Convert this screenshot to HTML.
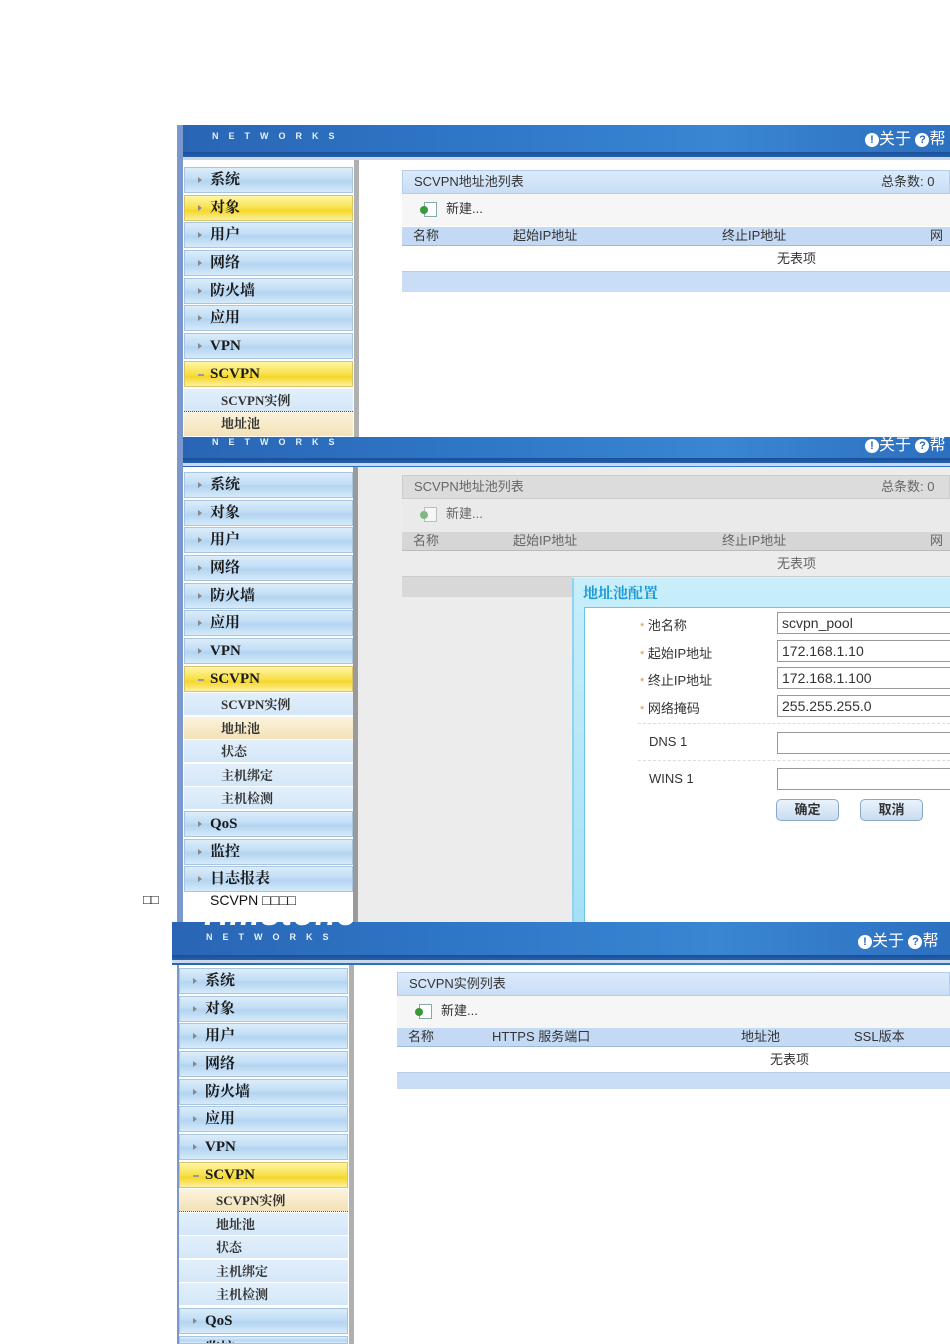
<!DOCTYPE html>
<html style="height:1344px;overflow:hidden"><head><meta charset="utf-8"><style>
*{margin:0;padding:0;box-sizing:border-box}
body{width:950px;height:1344px;background:#fff;position:relative;overflow:hidden;font-family:"Liberation Sans","Noto Sans CJK SC",sans-serif;font-size:13px;color:#222}
.a{position:absolute}
.hdr{position:absolute;background:linear-gradient(90deg,#2a65b5,#2f78c8 40%,#3a86d2 70%,#2c70c0);overflow:hidden}
.hdr .band{position:absolute;left:0;right:0;height:5px;background:linear-gradient(#1a4f99,#2760ab)}
.hdr .ln{position:absolute;left:0;right:0;height:3px;background:#c9d9ec}
.logo{position:absolute;color:#fff;font:italic bold 34px "Liberation Sans",sans-serif;letter-spacing:1px}
.nw{position:absolute;color:#e8f0fa;font:bold 9px "Liberation Sans",sans-serif;letter-spacing:10px}
.tr{position:absolute;color:#fff;font-size:16px;white-space:nowrap}
.tr b{display:inline-block;width:14px;height:14px;border-radius:50%;background:#fff;color:#2a66b8;font-size:11px;text-align:center;line-height:14px;vertical-align:1px}
.strip{position:absolute;background:#7b98cc}
.it{position:absolute;width:169px;height:26px;background:linear-gradient(#dcedfa,#c0ddf5 45%,#b3d4f1 55%,#d6eaf9);border:1px solid #a7c5e0;font-weight:bold;font-size:15px;line-height:24px;padding-left:25px;color:#1a1a1a;font-family:"Liberation Serif","Noto Serif CJK SC",serif}
.it:before{content:"";position:absolute;left:13px;top:9px;border-left:4px solid #888;border-top:3px solid transparent;border-bottom:3px solid transparent}
.y{background:linear-gradient(#fff6a6,#f8e04a 50%,#f5d628 60%,#fdf0a0);border-color:#d9c46a}
.y.dn:before{border:none;width:6px;height:2px;background:#999;top:12px}
.sub{position:absolute;width:169px;height:23px;background:linear-gradient(#e2effb,#d4e7f8);border-bottom:1px solid #fff;font-weight:bold;font-size:13px;line-height:23px;padding-left:37px;color:#333;font-family:"Liberation Serif","Noto Serif CJK SC",serif}
.hl{background:linear-gradient(#fbf3dc,#f3e2b8)}
.sb{position:absolute;width:5px;background:#9a9a9a}
.tt{position:absolute;background:linear-gradient(#dbeafb,#c9def6);border:1px solid #b6cde9;font-size:13px;line-height:22px;padding-left:11px;color:#333}
.tb{position:absolute;background:#f6f6f6;font-size:13px;line-height:30px;padding-left:44px;color:#333}
.ic{position:absolute;left:22px;top:8px;width:13px;height:15px;border:1px solid #8aa;background:#fff}
.ic:before{content:"";position:absolute;left:-5px;top:3px;width:8px;height:8px;background:#3a9a3a;border-radius:50%}
.th{position:absolute;background:#c4daf4;border-bottom:1px solid #9fb9d8;font-size:13px;line-height:18px;color:#333}
.th span,.rw span{position:absolute}
.rw{position:absolute;background:#fff;border-bottom:1px solid #b6cde9;font-size:13px;line-height:26px;color:#333}
.ft{position:absolute;background:#c9def6}
.lab{position:absolute;font-size:13px;color:#333}
.lab i{color:#c8a040;font-style:normal;font-size:11px}
.inp{position:absolute;height:22px;border:1px solid #999;border-right:none;background:#fff;font-size:14px;line-height:20px;padding-left:4px;color:#333}
.dash{position:absolute;height:0;border-top:1px dashed #ddd}
.btn{position:absolute;width:63px;height:22px;border:1px solid #88a8c8;border-radius:5px;background:linear-gradient(#eaf3fc,#c9dcef);font-weight:bold;font-size:13px;text-align:center;line-height:20px;color:#333}
</style></head><body>

<!-- PANEL 1 -->
<div class="strip" style="left:177px;top:125px;width:6px;height:312px"></div>
<div class="hdr" style="left:183px;top:125px;width:767px;height:35px">
  <div class="logo" style="left:28px;top:-33px">Hillstone</div>
  <div class="nw" style="left:29px;top:6px">NETWORKS</div>
  <div class="tr" style="left:682px;top:0px"><b>!</b>关于 <b>?</b>帮</div>
  <div class="band" style="top:27px"></div><div class="ln" style="top:32px"></div>
</div>
<div class="it" style="left:184px;top:167px">系统</div>
<div class="it y" style="left:184px;top:195px">对象</div>
<div class="it" style="left:184px;top:222px">用户</div>
<div class="it" style="left:184px;top:250px">网络</div>
<div class="it" style="left:184px;top:278px">防火墙</div>
<div class="it" style="left:184px;top:305px">应用</div>
<div class="it" style="left:184px;top:333px">VPN</div>
<div class="it y dn" style="left:184px;top:361px">SCVPN</div>
<div class="sub" style="left:184px;top:389px;border-bottom:1px dotted #555">SCVPN实例</div>
<div class="sub hl" style="left:184px;top:412px;height:25px">地址池</div>
<div class="sb" style="left:354px;top:160px;height:277px;background:#b0b0b0"></div>
<div class="tt" style="left:402px;top:170px;width:548px;height:24px">SCVPN地址池列表<span class="a" style="left:478px">总条数: 0 &nbsp;每</span></div>
<div class="tb" style="left:402px;top:194px;width:548px;height:32px"><div class="ic"></div>新建...</div>
<div class="th" style="left:402px;top:227px;width:548px;height:19px"><span style="left:11px">名称</span><span style="left:111px">起始IP地址</span><span style="left:320px">终止IP地址</span><span style="left:528px">网络</span></div>
<div class="rw" style="left:402px;top:246px;width:548px;height:26px"><span style="left:375px">无表项</span></div>
<div class="ft" style="left:402px;top:272px;width:548px;height:20px"></div>

<!-- PANEL 2 -->
<div class="strip" style="left:177px;top:437px;width:6px;height:485px"></div>
<div class="hdr" style="left:183px;top:437px;width:767px;height:30px">
  <div class="nw" style="left:29px;top:0px">NETWORKS</div>
  <div class="tr" style="left:682px;top:-6px"><b>!</b>关于 <b>?</b>帮</div>
  <div class="band" style="top:21px"></div><div class="ln" style="top:26px"></div>
</div>
<div class="a" style="left:357px;top:467px;width:593px;height:455px;background:#ececec"></div>
<div class="it" style="left:184px;top:472px">系统</div>
<div class="it" style="left:184px;top:500px">对象</div>
<div class="it" style="left:184px;top:527px">用户</div>
<div class="it" style="left:184px;top:555px">网络</div>
<div class="it" style="left:184px;top:583px">防火墙</div>
<div class="it" style="left:184px;top:610px">应用</div>
<div class="it" style="left:184px;top:638px">VPN</div>
<div class="it y dn" style="left:184px;top:666px">SCVPN</div>
<div class="sub" style="left:184px;top:693px">SCVPN实例</div>
<div class="sub hl" style="left:184px;top:717px">地址池</div>
<div class="sub" style="left:184px;top:740px">状态</div>
<div class="sub" style="left:184px;top:764px">主机绑定</div>
<div class="sub" style="left:184px;top:787px">主机检测</div>
<div class="it" style="left:184px;top:811px">QoS</div>
<div class="it" style="left:184px;top:839px">监控</div>
<div class="it" style="left:184px;top:866px">日志报表</div>
<div class="a" style="left:210px;top:892px;font-size:14px;color:#111">SCVPN □□□□</div>
<div class="a" style="left:143px;top:892px;font-size:13px;color:#111">□□</div>
<div class="sb" style="left:353px;top:467px;height:455px"></div>
<div class="tt" style="left:402px;top:475px;width:548px;height:24px;background:#dcdcdc;border-color:#ccc;color:#666">SCVPN地址池列表<span class="a" style="left:478px">总条数: 0 &nbsp;每</span></div>
<div class="tb" style="left:402px;top:499px;width:548px;height:32px;background:#eaeaea;color:#666"><div class="ic" style="opacity:.6"></div>新建...</div>
<div class="th" style="left:402px;top:532px;width:548px;height:19px;background:#d6d6d6;border-color:#bbb;color:#666"><span style="left:11px">名称</span><span style="left:111px">起始IP地址</span><span style="left:320px">终止IP地址</span><span style="left:528px">网络</span></div>
<div class="rw" style="left:402px;top:551px;width:548px;height:26px;background:#ececec;border-color:#ccc;color:#666"><span style="left:375px">无表项</span></div>
<div class="ft" style="left:402px;top:577px;width:170px;height:20px;background:#d8d8d8"></div>
<!-- dialog -->
<div class="a" style="left:572px;top:578px;width:378px;height:344px;background:linear-gradient(#c8eefa,#a6e0f6);border-left:2px solid #8fd3f0"></div>
<div class="a" style="left:583px;top:582px;font-size:15px;font-weight:bold;color:#1e9ad6;font-family:'Liberation Serif','Noto Serif CJK SC',serif">地址池配置</div>
<div class="a" style="left:584px;top:607px;width:366px;height:315px;background:#fff;border:1px solid #6cc4e6;border-right:none;border-bottom:none"></div>
<div class="lab" style="left:640px;top:615px"><i>*</i> 池名称</div>
<div class="lab" style="left:640px;top:643px"><i>*</i> 起始IP地址</div>
<div class="lab" style="left:640px;top:670px"><i>*</i> 终止IP地址</div>
<div class="lab" style="left:640px;top:698px"><i>*</i> 网络掩码</div>
<div class="lab" style="left:649px;top:734px">DNS 1</div>
<div class="lab" style="left:649px;top:771px">WINS 1</div>
<div class="inp" style="left:777px;top:612px;width:173px">scvpn_pool</div>
<div class="inp" style="left:777px;top:640px;width:173px">172.168.1.10</div>
<div class="inp" style="left:777px;top:667px;width:173px">172.168.1.100</div>
<div class="inp" style="left:777px;top:695px;width:173px">255.255.255.0</div>
<div class="dash" style="left:638px;top:723px;width:312px"></div>
<div class="inp" style="left:777px;top:732px;width:173px"></div>
<div class="dash" style="left:638px;top:760px;width:312px"></div>
<div class="inp" style="left:777px;top:768px;width:173px"></div>
<div class="btn" style="left:776px;top:799px">确定</div>
<div class="btn" style="left:860px;top:799px">取消</div>

<!-- PANEL 3 -->
<div class="hdr" style="left:172px;top:922px;width:778px;height:43px">
  <div class="logo" style="left:32px;top:-27px">Hillstone</div>
  <div class="nw" style="left:34px;top:10px">NETWORKS</div>
  <div class="tr" style="left:686px;top:5px"><b>!</b>关于 <b>?</b>帮</div>
  <div class="band" style="top:33px"></div><div class="ln" style="top:38px"></div>
</div>
<div class="strip" style="left:177px;top:965px;width:2px;height:379px"></div>
<div class="it" style="left:179px;top:968px">系统</div>
<div class="it" style="left:179px;top:996px">对象</div>
<div class="it" style="left:179px;top:1023px">用户</div>
<div class="it" style="left:179px;top:1051px">网络</div>
<div class="it" style="left:179px;top:1079px">防火墙</div>
<div class="it" style="left:179px;top:1106px">应用</div>
<div class="it" style="left:179px;top:1134px">VPN</div>
<div class="it y dn" style="left:179px;top:1162px">SCVPN</div>
<div class="sub hl" style="left:179px;top:1189px;border-bottom:1px dotted #555">SCVPN实例</div>
<div class="sub" style="left:179px;top:1213px">地址池</div>
<div class="sub" style="left:179px;top:1236px">状态</div>
<div class="sub" style="left:179px;top:1260px">主机绑定</div>
<div class="sub" style="left:179px;top:1283px">主机检测</div>
<div class="it" style="left:179px;top:1308px">QoS</div>
<div class="it" style="left:179px;top:1336px;height:8px;overflow:hidden">监控</div>
<div class="sb" style="left:349px;top:965px;height:379px;background:#b0b0b0"></div>
<div class="tt" style="left:397px;top:972px;width:553px;height:24px">SCVPN实例列表</div>
<div class="tb" style="left:397px;top:996px;width:553px;height:32px"><div class="ic"></div>新建...</div>
<div class="th" style="left:397px;top:1028px;width:553px;height:19px"><span style="left:11px">名称</span><span style="left:95px">HTTPS 服务端口</span><span style="left:344px">地址池</span><span style="left:457px">SSL版本</span></div>
<div class="rw" style="left:397px;top:1047px;width:553px;height:26px"><span style="left:373px">无表项</span></div>
<div class="ft" style="left:397px;top:1073px;width:553px;height:16px"></div>
</body></html>
